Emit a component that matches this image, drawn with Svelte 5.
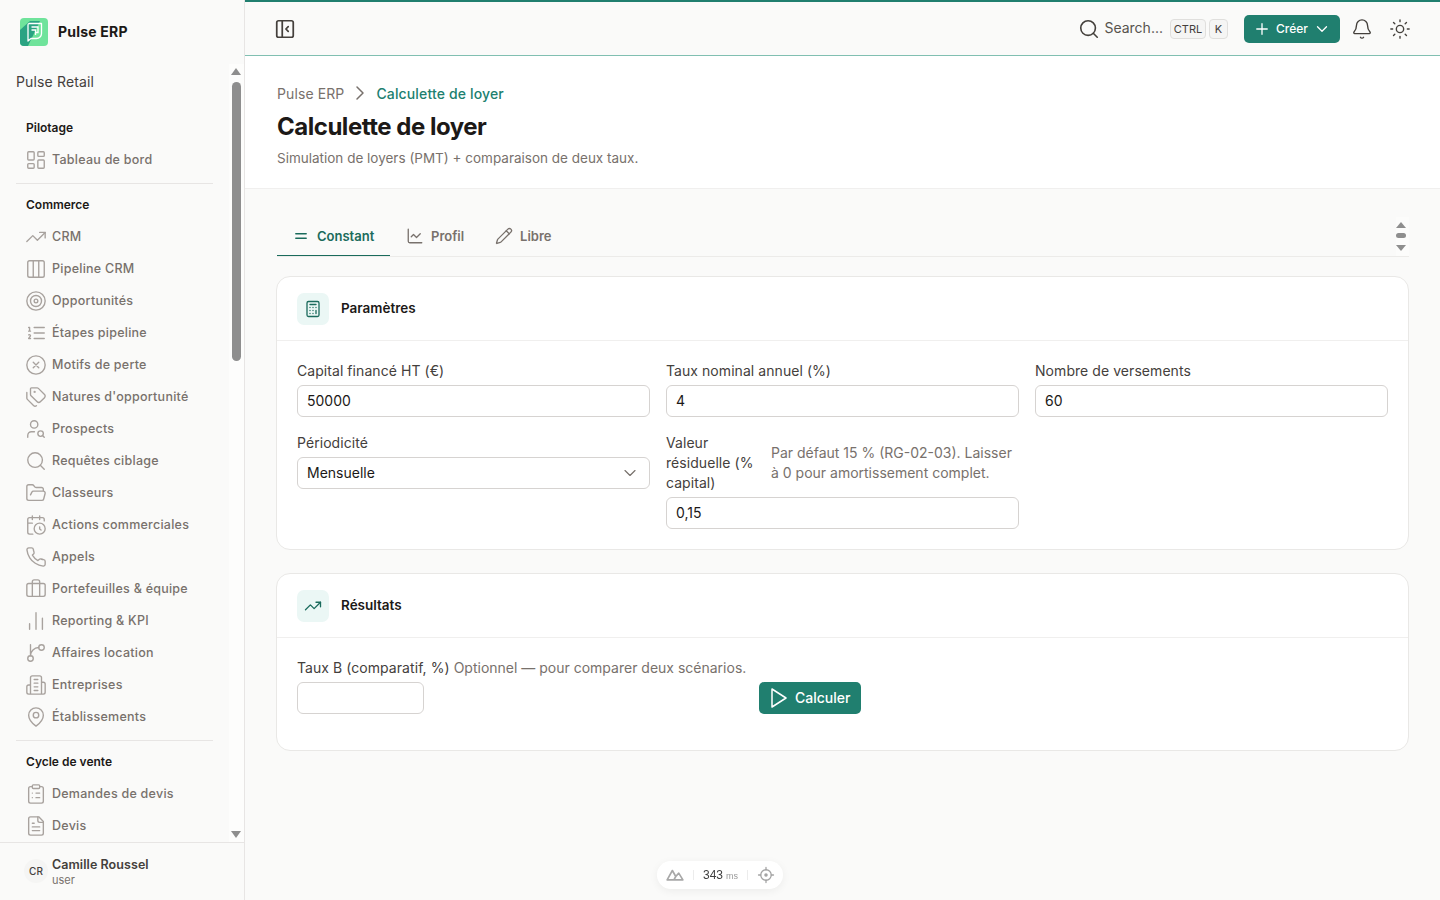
<script>
  const I = {
    dash: '<rect x="3" y="3" width="7" height="9" rx="1"/><rect x="14" y="3" width="7" height="5" rx="1"/><rect x="14" y="12" width="7" height="9" rx="1"/><rect x="3" y="16" width="7" height="5" rx="1"/>',
    trend: '<path d="M22 7 13.5 15.5 8.5 10.5 2 17"/><path d="M16 7h6v6"/>',
    cols: '<rect x="3" y="3" width="18" height="18" rx="2"/><path d="M9 3v18M15 3v18"/>',
    target: '<circle cx="12" cy="12" r="10"/><circle cx="12" cy="12" r="6"/><circle cx="12" cy="12" r="2"/>',
    list: '<path d="M10 6h11M10 12h11M10 18h11M4 6h1v4M4 10h2M6 18H4c0-1 2-2 2-3s-1-1.5-2-1"/>',
    x: '<circle cx="12" cy="12" r="10"/><path d="m15 9-6 6M9 9l6 6"/>',
    tags: '<path d="M13.172 2a2 2 0 0 1 1.414.586l6.71 6.71a2.4 2.4 0 0 1 0 3.408l-4.592 4.592a2.4 2.4 0 0 1-3.408 0l-6.71-6.71A2 2 0 0 1 6 9.172V3a1 1 0 0 1 1-1z"/><path d="M2 7v6.172a2 2 0 0 0 .586 1.414l6.71 6.71a2.4 2.4 0 0 0 3.19.193"/><circle cx="10.5" cy="6.5" r=".5"/>',
    usearch: '<circle cx="10" cy="7" r="4"/><path d="M10.3 15H7a4 4 0 0 0-4 4v2"/><circle cx="17" cy="17" r="3"/><path d="m21 21-1.9-1.9"/>',
    search: '<path d="m21 21-4.34-4.34"/><circle cx="11" cy="11" r="8"/>',
    folder: '<path d="m6 14 1.5-2.9A2 2 0 0 1 9.24 10H20a2 2 0 0 1 1.94 2.5l-1.54 6a2 2 0 0 1-1.95 1.5H4a2 2 0 0 1-2-2V5a2 2 0 0 1 2-2h3.9a2 2 0 0 1 1.69.9l.81 1.2a2 2 0 0 0 1.67.9H18a2 2 0 0 1 2 2v2"/>',
    cal: '<path d="M21 7.5V6a2 2 0 0 0-2-2H5a2 2 0 0 0-2 2v14a2 2 0 0 0 2 2h3.5M16 2v4M8 2v4M3 10h5M17.5 17.5 16 16.3V14"/><circle cx="16" cy="16" r="6"/>',
    phone: '<path d="M22 16.92v3a2 2 0 0 1-2.18 2 19.79 19.79 0 0 1-8.63-3.07 19.5 19.5 0 0 1-6-6 19.79 19.79 0 0 1-3.07-8.67A2 2 0 0 1 4.11 2h3a2 2 0 0 1 2 1.72 12.84 12.84 0 0 0 .7 2.81 2 2 0 0 1-.45 2.11L8.09 9.91a16 16 0 0 0 6 6l1.27-1.27a2 2 0 0 1 2.11-.45 12.84 12.84 0 0 0 2.81.7A2 2 0 0 1 22 16.92z"/>',
    brief: '<path d="M16 20V4a2 2 0 0 0-2-2h-4a2 2 0 0 0-2 2v16"/><rect x="2" y="6" width="20" height="14" rx="2"/>',
    bars: '<path d="M5 21v-6M12 21V3M19 21V9"/>',
    branch: '<path d="M6 3v12M15 6a9 9 0 0 0-9 9"/><circle cx="18" cy="6" r="3"/><circle cx="6" cy="18" r="3"/>',
    building: '<path d="M6 22V4a2 2 0 0 1 2-2h8a2 2 0 0 1 2 2v18ZM6 12H4a2 2 0 0 0-2 2v6a2 2 0 0 0 2 2h2M18 9h2a2 2 0 0 1 2 2v9a2 2 0 0 1-2 2h-2M10 6h4M10 10h4M10 14h4M10 18h4"/>',
    pin: '<path d="M20 10c0 6-8 12-8 12s-8-6-8-12a8 8 0 0 1 16 0Z"/><circle cx="12" cy="10" r="3"/>',
    clip: '<rect x="8" y="2" width="8" height="4" rx="1"/><path d="M16 4h2a2 2 0 0 1 2 2v14a2 2 0 0 1-2 2H6a2 2 0 0 1-2-2V6a2 2 0 0 1 2-2h2M12 11h4M12 16h4M8 11h.01M8 16h.01"/>',
    file: '<path d="M15 2H6a2 2 0 0 0-2 2v16a2 2 0 0 0 2 2h12a2 2 0 0 0 2-2V7Z"/><path d="M14 2v4a2 2 0 0 0 2 2h4M10 9H8M16 13H8M16 17H8"/>',
    panel: '<rect x="3" y="3" width="18" height="18" rx="2"/><path d="M9 3v18M15.5 14.5 13 12l2.5-2.5"/>',
    bell: '<path d="M10.268 21a2 2 0 0 0 3.464 0"/><path d="M3.262 15.326A1 1 0 0 0 4 17h16a1 1 0 0 0 .74-1.673C19.41 13.956 18 12.499 18 8A6 6 0 0 0 6 8c0 4.499-1.411 5.956-2.738 7.326"/>',
    sun: '<circle cx="12" cy="12" r="4"/><path d="M12 2v2M12 20v2M4.93 4.93l1.41 1.41M17.66 17.66l1.41 1.41M2 12h2M20 12h2M6.34 17.66l-1.41 1.41M19.07 4.93l-1.41 1.41"/>',
    plus: '<path d="M5 12h14M12 5v14"/>',
    down: '<path d="m6 9 6 6 6-6"/>',
    right: '<path d="m9 18 6-6-6-6"/>',
    equal: '<path d="M5 9h14M5 15h14"/>',
    chart: '<path d="M3 3v16a2 2 0 0 0 2 2h16"/><path d="m19 9-5 5-4-4-3 3"/>',
    pencil: '<path d="M21.174 6.812a1 1 0 0 0-3.986-3.987L3.842 16.174a2 2 0 0 0-.5.83l-1.321 4.352a.5.5 0 0 0 .623.622l4.353-1.32a2 2 0 0 0 .83-.497z"/><path d="m15 5 4 4"/>',
    calc: '<rect x="4" y="2" width="16" height="20" rx="2"/><path d="M8 6h8M16 14v4M16 10h.01M12 10h.01M8 10h.01M12 14h.01M8 14h.01M12 18h.01M8 18h.01"/>',
    play: '<polygon points="6 3 20 12 6 21"/>'
  };
  const commerce = [
    ['trend','CRM'],['cols','Pipeline CRM'],['target','Opportunités'],['list','Étapes pipeline'],
    ['x','Motifs de perte'],['tags',"Natures d'opportunité"],['usearch','Prospects'],['search','Requêtes ciblage'],
    ['folder','Classeurs'],['cal','Actions commerciales'],['phone','Appels'],['brief','Portefeuilles & équipe'],
    ['bars','Reporting & KPI'],['branch','Affaires location'],['building','Entreprises'],['pin','Établissements']
  ];
</script>

{#snippet icon(name, cls)}
  <svg class={cls} viewBox="0 0 24 24" fill="none" stroke="currentColor" stroke-linecap="round" stroke-linejoin="round" aria-hidden="true">{@html I[name]}</svg>
{/snippet}

{#snippet item(name, label)}
  <a class="nav-item" href="#/">{@render icon(name, 'nav-ico')}<span>{label}</span></a>
{/snippet}

<div class="app">
  <aside class="side">
    <div class="brand">
      <svg class="logo" viewBox="0 0 28 28" aria-hidden="true">
        <rect width="28" height="28" rx="4" fill="#6fe39b"/>
        <path d="M0 24V12L10 3 H20 L8 28 H4 A4 4 0 0 1 0 24Z" fill="#2aa382"/>
        <path d="M9 5.5h12.5v10a5 5 0 0 1-5 5H11l-3 2.5v-3.5V7a1.5 1.5 0 0 1 1-1.5Z" fill="none" stroke="#fff" stroke-width="1.3" stroke-linejoin="round"/>
        <path d="M11.5 9h6.5v5.5h-2.2M11.5 12h4v5" fill="none" stroke="#fff" stroke-width="1.3"/>
      </svg>
      <span>Pulse ERP</span>
    </div>
    <div class="nav-wrap">
      <nav class="nav">
        <div class="org">Pulse Retail</div>
        <section class="group">
          <h3>Pilotage</h3>
          {@render item('dash','Tableau de bord')}
        </section>
        <section class="group">
          <h3>Commerce</h3>
          {#each commerce as c}{@render item(c[0], c[1])}{/each}
        </section>
        <section class="group">
          <h3>Cycle de vente</h3>
          {@render item('clip','Demandes de devis')}
          {@render item('file','Devis')}
        </section>
      </nav>
      <div class="sbar">
        <div class="arrow up"></div>
        <div class="sb-track"><div class="thumb"></div></div>
        <div class="arrow dn"></div>
      </div>
    </div>
    <div class="user">
      <div class="avatar">CR</div>
      <div class="who"><strong>Camille Roussel</strong><small>user</small></div>
    </div>
  </aside>

  <div class="main">
    <header class="top">
      <button class="ghost panel" aria-label="Panneau">{@render icon('panel','i22 heavy')}</button>
      <div class="top-right">
        <div class="search">{@render icon('search','i22 dark')}<span>Search...</span><kbd>CTRL</kbd><kbd class="k">K</kbd></div>
        <button class="create">{@render icon('plus','i18')}<span>Créer</span>{@render icon('down','i18')}</button>
        <button class="ghost bell" aria-label="Notifications">{@render icon('bell','i22')}</button>
        <button class="ghost sun" aria-label="Thème">{@render icon('sun','i22')}</button>
      </div>
    </header>

    <div class="page-head">
      <div class="crumbs"><span>Pulse ERP</span>{@render icon('right','i24')}<b>Calculette de loyer</b></div>
      <h1>Calculette de loyer</h1>
      <p>Simulation de loyers (PMT) + comparaison de deux taux.</p>
    </div>

    <div class="content">
      <div class="tabs">
        <div class="tab active">{@render icon('equal','i18')}<span>Constant</span></div>
        <div class="tab">{@render icon('chart','i18')}<span>Profil</span></div>
        <div class="tab">{@render icon('pencil','i18')}<span>Libre</span></div>
        <div class="tabs-bar">
          <div class="arrow up"></div>
          <div class="mini"></div>
          <div class="arrow dn"></div>
        </div>
      </div>

      <section class="card">
        <div class="card-head"><div class="badge">{@render icon('calc','i18')}</div><h2>Paramètres</h2></div>
        <div class="form">
          <div class="field">
            <div class="lab"><label for="a">Capital financé HT (€)</label></div>
            <input id="a" value="50000" />
          </div>
          <div class="field">
            <div class="lab"><label for="b">Taux nominal annuel (%)</label></div>
            <input id="b" value="4" />
          </div>
          <div class="field">
            <div class="lab"><label for="c">Nombre de versements</label></div>
            <input id="c" value="60" />
          </div>
          <div class="field">
            <div class="lab"><label for="d">Périodicité</label></div>
            <div class="select" id="d"><span>Mensuelle</span>{@render icon('down','i20')}</div>
          </div>
          <div class="field">
            <div class="lab split">
              <label for="e">Valeur résiduelle (% capital)</label>
              <span class="hint">Par défaut 15 % (RG-02-03). Laisser à 0 pour amortissement complet.</span>
            </div>
            <input id="e" value="0,15" />
          </div>
        </div>
      </section>

      <section class="card">
        <div class="card-head"><div class="badge">{@render icon('trend','i18')}</div><h2>Résultats</h2></div>
        <div class="results">
          <div class="field">
            <div class="lab one"><label for="f">Taux B (comparatif, %)</label> <span class="hint">Optionnel — pour comparer deux scénarios.</span></div>
            <input id="f" class="short" />
          </div>
          <button class="calc">{@render icon('play','i24')}<span>Calculer</span></button>
        </div>
      </section>
    </div>
  </div>

  <div class="devtools">
    <svg class="nuxt" viewBox="0 0 24 16" fill="none" stroke="#a8a8a8" stroke-width="2.2" stroke-linejoin="round" aria-hidden="true"><path d="M1.5 14.5 8.5 2l4.5 8-2.5 4.5ZM10.5 14.5H22.5L17 5.5 13 10"/></svg>
    <i></i>
    <span class="ms"><b>343</b><small>ms</small></span>
    <i></i>
    <svg class="aim" viewBox="0 0 24 24" fill="none" stroke="#a3a3a3" stroke-width="1.7" stroke-linecap="round" aria-hidden="true"><circle cx="12" cy="12" r="7"/><circle cx="12" cy="12" r="1.5" fill="#a3a3a3"/><path d="M12 2v3M12 19v3M2 12h3M19 12h3"/></svg>
  </div>
</div>

<style>
  :global(body) { margin: 0; background: #fafaf9; font-family: Inter, "Liberation Sans", sans-serif; color: #1c1917; }
  * { box-sizing: border-box; }
  .app { display: flex; height: 900px; overflow: hidden; }
  .side { width: 245px; flex: none; height: 100%; display: flex; flex-direction: column; background: #fafaf9; border-right: 1px solid #e7e5e4; }
  .brand { height: 64px; flex: none; display: flex; align-items: center; gap: 10px; padding-left: 20px; font-size: 14px; font-weight: 700; letter-spacing: .2px; color: #1c1917; }
  .brand span { transform: translateY(-1px); }
  .logo { width: 28px; height: 28px; }
  .nav-wrap { position: relative; flex: 1; min-height: 0; }
  .nav { height: 100%; overflow: hidden; padding: 0 31px 0 16px; }
  .org { height: 48px; padding-top: 8px; font-size: 14px; line-height: 20px; letter-spacing: .15px; color: #44403c; }
  .group { padding: 5px 0 7px; border-bottom: 1px solid #e7e5e4; }
  .group:first-of-type { padding-top: 0; }
  .group h3 { margin: 0; padding: 0 10px; height: 32px; line-height: 32px; font-size: 12px; font-weight: 600; color: #1c1917; }
  .nav-item { display: flex; align-items: center; gap: 5px; height: 32px; padding-left: 9px; font-size: 12.5px; letter-spacing: .25px; font-weight: 500; color: #78716c; text-decoration: none; }
  .nav-item span { margin-bottom: 1px; }
  .nav-ico { width: 22px; height: 22px; flex: none; color: #a8a29e; stroke-width: 1.5; }
  .sbar { position: absolute; top: 0; right: 0; bottom: 0; width: 15px; background: #fdfdfc; display: flex; flex-direction: column; align-items: center; padding: 4px 1px 4px 0; }
  .sb-track { flex: 1; width: 100%; padding: 7px 3px 0 3px; }
  .thumb { width: 9px; height: 279px; border-radius: 5px; background: #8e8e8e; }
  .arrow { width: 0; height: 0; border-left: 5px solid transparent; border-right: 5px solid transparent; flex: none; }
  .arrow.up { border-bottom: 7px solid #8e8e8e; }
  .arrow.dn { border-top: 7px solid #8e8e8e; }
  .user { height: 58px; flex: none; border-top: 1px solid #e7e5e4; display: flex; align-items: center; gap: 4px; padding: 0 0 2px 24px; }
  .avatar { width: 24px; height: 24px; border-radius: 50%; background: #f5f5f4; display: flex; align-items: center; justify-content: center; font-size: 10px; font-weight: 500; color: #44403c; }
  .who { display: flex; flex-direction: column; padding-top: 2px; }
  .who strong { font-size: 12.5px; letter-spacing: .07px; line-height: 16px; font-weight: 600; color: #44403c; }
  .who small { font-size: 11px; line-height: 14px; color: #78716c; }

  .main { flex: 1; min-width: 0; display: flex; flex-direction: column; }
  .top { height: 56px; flex: none; display: flex; align-items: center; justify-content: space-between; border-top: 2px solid #207f6f; border-bottom: 1px solid #80bfb1; padding: 0 29px 0 29px; background: #fafaf9; }
  button { font: inherit; border: 0; background: none; padding: 0; cursor: pointer; }
  .ghost { display: flex; color: #44403c; }
  .i24 { width: 24px; height: 24px; stroke-width: 1.5; }
  .i22 { width: 22px; height: 22px; stroke-width: 1.5; }
  .i20 { width: 20px; height: 20px; stroke-width: 1.5; }
  .i18 { width: 18px; height: 18px; stroke-width: 1.75; }
  :global(.ghost .heavy) { stroke-width: 1.9; }
  .top-right { display: flex; align-items: center; }
  .search { display: flex; align-items: center; font-size: 14px; color: #57534e; margin-right: 16px; }
  :global(.search .dark) { color: #44403c; margin-right: 4px; stroke-width: 1.75; }
  .search span { margin: -2px 7px 0 0; }
  kbd { font-family: inherit; font-size: 11px; height: 20px; width: 36px; display: inline-flex; align-items: center; justify-content: center; border: 1px solid #e0dfdd; border-radius: 4px; background: #f5f5f4; color: #44403c; }
  kbd.k { width: 19px; margin-left: 3px; }
  .create { height: 28px; width: 96px; display: flex; align-items: center; gap: 5px; padding-left: 9px; border-radius: 5px; background: #207f6f; color: #fff; font-size: 12px; font-weight: 500; }
  .bell { margin-left: 11px; }
  .sun { margin-left: 16px; }

  .page-head { background: #fff; height: 133px; flex: none; padding: 27px 32px 0; border-bottom: 1px solid #f0efee; }
  .crumbs { display: flex; align-items: center; gap: 4px; height: 20px; font-size: 14px; letter-spacing: .1px; color: #78716c; }
  .crumbs b { font-weight: 500; letter-spacing: .15px; color: #207f6f; }
  h1 { margin: 8px 0 0; font-size: 24px; line-height: 32px; font-weight: 700; letter-spacing: -0.02em; color: #1c1917; }
  .page-head p { margin: 5px 0 0; font-size: 13.5px; line-height: 20px; color: #78716c; }

  .content { padding: 27px 31px 0; flex: 1; }
  .tabs { position: relative; display: flex; height: 41px; margin-left: 1px; margin-bottom: 19px; border-bottom: 1px solid #ecebe9; }
  .tab { height: 40px; display: flex; align-items: center; gap: 7px; font-size: 13px; font-weight: 600; color: #78716c; padding: 0 15px 0 16px; }
  .tab span { margin-bottom: 1px; }
  .tab.active { width: 113px; padding-left: 15px; color: #1a6b5c; border-bottom: 1px solid #1a6b5c; }
  .tab.active span { margin-bottom: 0; }
  .tabs-bar { position: absolute; top: 1px; right: 0; bottom: 0; width: 13px; background: #fcfcfb; display: flex; flex-direction: column; align-items: center; padding: 5px 3px 5px 0; }
  .tabs-bar .arrow { border-left-width: 5px; border-right-width: 5px; }
  .tabs-bar .arrow.up { border-bottom-width: 6px; }
  .tabs-bar .arrow.dn { border-top-width: 6px; }
  .mini { width: 10px; height: 5px; border-radius: 3px; background: #8e8e8e; margin: 5px 0 7px; }
  .card { background: #fff; border: 1px solid #e9e8e6; border-radius: 14px; margin-bottom: 23px; }
  .card-head { height: 64px; display: flex; align-items: center; gap: 12px; padding: 0 20px; border-bottom: 1px solid #f0efee; }
  .badge { width: 32px; height: 32px; border-radius: 7px; background: #ebf7f5; display: flex; align-items: center; justify-content: center; color: #1a6b5c; }
  h2 { margin: 0 0 2px; font-size: 13.5px; font-weight: 600; color: #1c1917; }
  .form { display: grid; grid-template-columns: repeat(3, 1fr); gap: 16px; padding: 20px; }
  .lab { font-size: 14px; line-height: 20px; letter-spacing: .06px; color: #44403c; margin-bottom: 4px; }
  .lab.one { white-space: nowrap; }
  .split { display: flex; justify-content: space-between; align-items: center; gap: 16px; }
  .split label { flex: none; width: 89px; }
  .hint { color: #78716c; letter-spacing: 0; }
  .split .hint { flex: 1; }
  input, .select { display: flex; align-items: center; width: 100%; height: 32px; border: 1px solid #d6d3d1; border-radius: 6px; background: #fff; font: inherit; font-size: 14px; color: #1c1917; padding: 0 9px 2px; outline: 0; }
  .select { justify-content: space-between; padding-bottom: 0; }
  .select span { margin-bottom: 2px; }
  :global(.select .i20) { color: #78716c; stroke-width: 1.4; }
  .results { display: flex; align-items: flex-end; gap: 12px; padding: 20px 20px 36px; }
  input.short { width: 127px; }
  .results .field { width: 450px; }
  .calc { height: 32px; width: 102px; display: flex; align-items: center; gap: 5px; padding-left: 7px; border-radius: 5px; background: #207f6f; color: #fff; font-size: 14px; font-weight: 500; }
  .calc span { margin-bottom: 1px; }

  .devtools { position: fixed; left: 657px; bottom: 11px; width: 126px; height: 28px; display: flex; align-items: center; justify-content: space-between; padding: 0 8px 0 9px; border-radius: 14px; background: #fff; box-shadow: 0 2px 8px rgba(0,0,0,.06); }
  .devtools i { width: 1px; height: 10px; background: #ececec; }
  .nuxt { width: 18px; height: 12px; }
  .aim { width: 18px; height: 18px; }
  .ms { display: flex; align-items: baseline; gap: 3px; font-family: "Liberation Sans", sans-serif; }
  .ms b { font-weight: 400; font-size: 12px; color: #404040; }
  .ms small { font-size: 9px; color: #9a9a9a; }
</style>
